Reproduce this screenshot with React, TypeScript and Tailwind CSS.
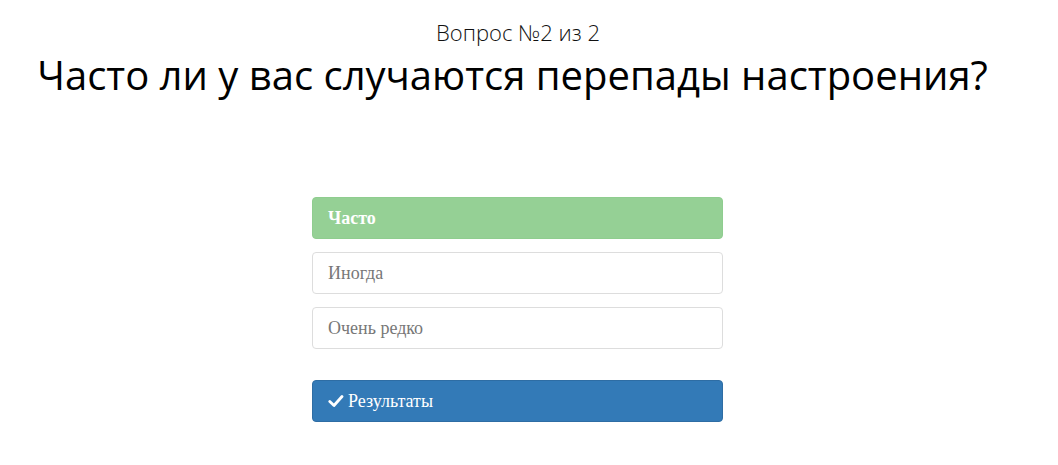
const options = ["Часто", "Иногда", "Очень редко"];

export default function App() {
    const selected = 0;

    return (
        <main className="w-[1058px] h-[465px] bg-white">
            <div className="pt-[15px] text-center font-['Open_Sans',sans-serif]">
                <p className="text-[22px] font-light leading-[34px] text-[#111] pr-[22px]">
                    Вопрос №2 из 2
                </p>
                <h1 className="text-[40px] leading-[52px] text-black pr-[33px]">
                    Часто ли у вас случаются перепады настроения?
                </h1>
            </div>

            <div className="w-[411px] ml-[312px] mt-[96px] flex flex-col gap-[13px] font-['Liberation_Serif',serif] text-[18px]">
                {options.map((opt, i) => (
                    <button
                        key={opt}
                        type="button"
                        className={
                            i === selected
                                ? "h-[42px] w-full rounded-[4px] border border-[#8fcd8f] bg-[#95d095] px-[15px] text-left font-bold text-white"
                                : "h-[42px] w-full rounded-[4px] border border-[#ddd] bg-white px-[15px] text-left text-[#777]"
                        }
                    >
                        {opt}
                    </button>
                ))}

                <button
                    type="button"
                    className="mt-[18px] h-[42px] w-full rounded-[4px] border border-[#2e6da4] bg-[#337ab7] px-[15px] text-left text-white flex items-center gap-[4px]"
                >
                    <svg width="16" height="14" viewBox="0 0 16 14" fill="none">
                        <path d="M1.8 7.5 L6 11.5 L14 2.5" stroke="white" strokeWidth="2.8" strokeLinecap="round" strokeLinejoin="round" />
                    </svg>
                    Результаты
                </button>
            </div>
        </main>
    );
}
